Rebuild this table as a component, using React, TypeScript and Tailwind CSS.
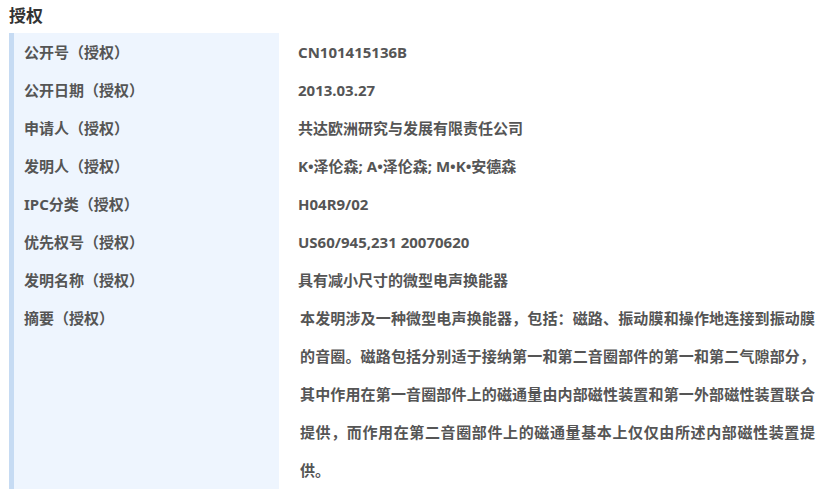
const rows: [string, string][] = [
  ['公开号（授权）', 'CN101415136B'],
  ['公开日期（授权）', '2013.03.27'],
  ['申请人（授权）', '共达欧洲研究与发展有限责任公司'],
  ['发明人（授权）', 'K•泽伦森; A•泽伦森; M•K•安德森'],
  ['IPC分类（授权）', 'H04R9/02'],
  ['优先权号（授权）', 'US60/945,231 20070620'],
  ['发明名称（授权）', '具有减小尺寸的微型电声换能器'],
]

const abstract =
  '本发明涉及一种微型电声换能器，包括：磁路、振动膜和操作地连接到振动膜的音圈。磁路包括分别适于接纳第一和第二音圈部件的第一和第二气隙部分，其中作用在第一音圈部件上的磁通量由内部磁性装置和第一外部磁性装置联合提供，而作用在第二音圈部件上的磁通量基本上仅仅由所述内部磁性装置提供。'

export default function App() {
  return (
    <div
      className="w-[831px] h-[496px] bg-white overflow-hidden text-[#555] font-bold"
      style={{ fontFamily: '"Noto Sans", "Noto Sans CJK SC", sans-serif' }}
    >
      <h2 className="pl-[9px] pt-[4px] h-[33px] text-[17px] leading-[24px] text-[#333]">授权</h2>

      <div className="flex text-[15px] leading-[38px]">
        {/* label column */}
        <div className="ml-[9px] w-[270px] shrink-0 border-l-[5px] border-[#c6dbf3] bg-[#eef5fe] pl-[10px]">
          {rows.map(([label]) => (
            <div key={label} className="h-[38px]">{label}</div>
          ))}
          <div className="h-[190px]">摘要（授权）</div>
        </div>

        {/* value column */}
        <div className="pl-[19px] w-[536px]">
          {rows.map(([label, value]) => (
            <div key={label} className="h-[38px]">{value}</div>
          ))}
          <p className="pl-[2px] text-justify">{abstract}</p>
        </div>
      </div>
    </div>
  )
}
